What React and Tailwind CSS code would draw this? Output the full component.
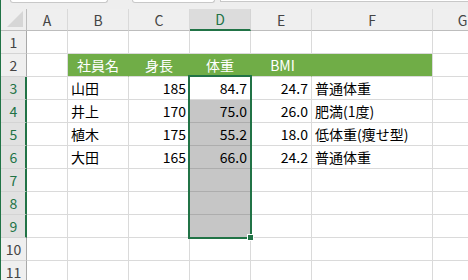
const cols = [
  { key: 'A', w: 'w-[41px]' },
  { key: 'B', w: 'w-[61px]' },
  { key: 'C', w: 'w-[61px]' },
  { key: 'D', w: 'w-[61px]' },
  { key: 'E', w: 'w-[61px]' },
  { key: 'F', w: 'w-[121px]' },
  { key: 'G', w: 'w-[60px]' },
];

const data = {
  2: { B: '社員名', C: '身長', D: '体重', E: 'BMI' },
  3: { B: '山田', C: '185', D: '84.7', E: '24.7', F: '普通体重' },
  4: { B: '井上', C: '170', D: '75.0', E: '26.0', F: '肥満(1度)' },
  5: { B: '植木', C: '175', D: '55.2', E: '18.0', F: '低体重(痩せ型)' },
  6: { B: '大田', C: '165', D: '66.0', E: '24.2', F: '普通体重' },
};

const rows = [1, 2, 3, 4, 5, 6, 7, 8, 9, 10, 11];
const numeric = ['C', 'D', 'E'];

const Cell = ({ row, col }) => {
  const text = data[row]?.[col.key];
  const band = row === 2 && ['B', 'C', 'D', 'E', 'F'].includes(col.key);
  const shaded = col.key === 'D' && row >= 4 && row <= 9;

  let cls = `${col.w} h-full shrink-0 flex items-center border-r border-b `;
  if (band) {
    cls += `bg-[#70ad47] text-white justify-center border-b-[#dadada] ${
      col.key === 'F' ? 'border-r-[#dadada]' : 'border-r-[#70ad47]'
    }`;
  } else if (shaded) {
    cls += 'bg-[#c6c6c6] border-[#adadad] text-black';
  } else {
    cls += 'border-[#dadada] text-black';
  }
  if (!band && text) {
    cls += numeric.includes(col.key) ? ' justify-end pr-[3px]' : ' pl-[3px]';
  }
  if (band && col.key === 'E') cls += ' pl-[3px]';

  return <div className={cls}>{text}</div>;
};

export default function App() {
  return (
    <div className="relative w-[468px] h-[280px] overflow-hidden bg-white flex font-['Noto_Sans_CJK_JP','Noto_Sans',sans-serif] text-[14px] leading-none">
      <div className="w-px shrink-0 bg-[#217346]" />
      <div className="flex-1 flex flex-col min-w-0">
        {/* formula bar remnants */}
        <div className="h-[9px] shrink-0 bg-[#eeeeee] flex items-start">
          <div className="ml-[9px] w-[98px] h-[3px] bg-white border border-t-0 border-[#c8c8c8] rounded-b-[3px]" />
          <div className="ml-[24px] w-[83px] h-[3px] bg-white border border-t-0 border-[#c8c8c8] rounded-b-[3px]" />
          <div className="ml-[5px] flex-1 h-[2px] bg-white border-b border-l border-[#c8c8c8]" />
        </div>

        {/* column headers */}
        <div className="h-[22px] shrink-0 flex bg-[#efefef] text-[#444]">
          <div className="w-[26px] h-full shrink-0 border-r border-b border-[#bdbdbd]">
            <svg width="25" height="21" viewBox="0 0 25 21">
              <polygon points="22,2 22,18 6,18" fill="#d6d6d6" />
            </svg>
          </div>
          {cols.map((c) =>
            c.key === 'D' ? (
              <div
                key={c.key}
                className={`${c.w} h-full shrink-0 flex items-center justify-center bg-[#dcdcdc] border-r border-r-[#d4d4d4] border-b-2 border-b-[#217346] text-[#217346]`}
              >
                {c.key}
              </div>
            ) : (
              <div
                key={c.key}
                className={`${c.w} h-full shrink-0 flex items-center justify-center border-r border-b border-r-[#d9d9d9] border-b-[#bdbdbd]`}
              >
                {c.key}
              </div>
            )
          )}
        </div>

        {rows.map((r) => {
          const sel = r >= 3 && r <= 9;
          return (
            <div key={r} className="h-[23px] shrink-0 flex">
              <div
                className={`w-[26px] h-full shrink-0 flex items-center justify-center border-b border-b-[#d4d4d4] ${
                  sel
                    ? 'bg-[#e1e1e1] border-r-2 border-r-[#217346] text-[#217346] pl-[1px]'
                    : 'bg-[#efefef] border-r border-r-[#a8a8a8] text-[#444]'
                }`}
              >
                {r}
              </div>
              {cols.map((c) => (
                <Cell key={c.key} row={r} col={c} />
              ))}
            </div>
          );
        })}
      </div>

      {/* selection D3:D9 */}
      <div className="absolute left-[188px] top-[75px] w-[64px] h-[164px] border-2 border-[#217346] pointer-events-none" />
      <div className="absolute left-[247px] top-[234px] w-[7px] h-[7px] bg-[#217346] border border-white" />
    </div>
  );
}
